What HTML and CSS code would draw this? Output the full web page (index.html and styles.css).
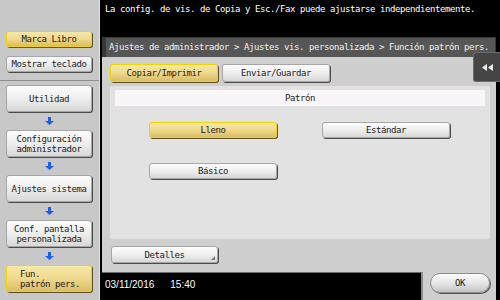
FILE: index.html
```html
<!DOCTYPE html>
<html lang="es">
<head>
<meta charset="utf-8">
<title>Función patrón pers.</title>
<link rel="stylesheet" href="styles.css">
</head>
<body>
<div class="screen">
  <aside class="side">
    <div class="side-top">
      <div class="btn yellow sb">Marca Libro</div>
      <div class="btn sb">Mostrar teclado</div>
    </div>
    <nav class="crumbs">
      <div class="btn nav">Utilidad</div>
      <div class="arrow"><svg width="9" height="8" viewBox="0 0 9 8"><rect x="3" y="0" width="3" height="4" fill="#1c5fe6"/><polygon points="0,4 9,4 4.5,8" fill="#1c5fe6"/></svg></div>
      <div class="btn nav">Configuración<br>administrador</div>
      <div class="arrow"><svg width="9" height="8" viewBox="0 0 9 8"><rect x="3" y="0" width="3" height="4" fill="#1c5fe6"/><polygon points="0,4 9,4 4.5,8" fill="#1c5fe6"/></svg></div>
      <div class="btn nav">Ajustes sistema</div>
      <div class="arrow"><svg width="9" height="8" viewBox="0 0 9 8"><rect x="3" y="0" width="3" height="4" fill="#1c5fe6"/><polygon points="0,4 9,4 4.5,8" fill="#1c5fe6"/></svg></div>
      <div class="btn nav">Conf. pantalla<br>personalizada</div>
      <div class="arrow"><svg width="9" height="8" viewBox="0 0 9 8"><rect x="3" y="0" width="3" height="4" fill="#1c5fe6"/><polygon points="0,4 9,4 4.5,8" fill="#1c5fe6"/></svg></div>
      <div class="btn nav yellow left">Fun.<br>patrón pers.</div>
    </nav>
  </aside>
  <main class="main">
    <div class="msg">La config. de vis. de Copia y Esc./Fax puede ajustarse independientemente.</div>
    <section class="panel">
      <div class="head"><div class="head-in">Ajustes de administrador &gt; Ajustes vis. personalizada &gt; Función patrón pers.</div></div>
      <div class="collapse"><svg width="11" height="7" viewBox="0 0 11 7"><polygon points="0,3.5 5,0 5,7" fill="#f2f2f2"/><polygon points="6,3.5 11,0 11,7" fill="#f2f2f2"/></svg></div>
      <div class="body">
        <div class="tabs">
          <div class="btn yellow tab">Copiar/Imprimir</div>
          <div class="btn tab">Enviar/Guardar</div>
        </div>
        <div class="inner">
          <div class="ptitle">Patrón</div>
          <div class="grid">
            <div class="btn yellow pbtn">Lleno</div>
            <div class="btn pbtn">Estándar</div>
            <div class="btn pbtn">Básico</div>
          </div>
        </div>
        <div class="btn det">Detalles</div>
      </div>
      <div class="foot">
        <div class="clock"><span>03/11/2016</span><span>15:40</span></div>
        <div class="btn ok">OK</div>
      </div>
    </section>
  </main>
</div>
</body>
</html>
```
FILE: styles.css
```css
* { box-sizing: border-box; margin: 0; padding: 0; }
html, body { width: 500px; height: 300px; overflow: hidden; }
body {
  font-family: "DejaVu Sans Mono", "Liberation Mono", monospace;
  font-size: 9px;
  letter-spacing: -0.42px;
  color: #1a1a1a;
  background: #000;
}
.screen { display: flex; width: 500px; height: 300px; }

/* sidebar */
.side {
  width: 100px;
  background: #c8c8c8;
  border-right: 1px solid #e4e4e4;
  display: flex;
  flex-direction: column;
}
.side-top {
  height: 81px;
  padding: 31px 0 0 6px;
  border-bottom: 1px solid #8e8e8e;
  display: flex;
  flex-direction: column;
  gap: 9px;
}
.crumbs { padding-top: 4px; display: flex; flex-direction: column; }
.arrow { height: 18px; width: 98px; display: flex; align-items: center; justify-content: center; }

/* buttons */
.btn {
  display: flex;
  align-items: center;
  justify-content: center;
  text-align: center;
  background: linear-gradient(#fdfdfd, #eeeeee 50%, #d8d8d8);
  border: 1px solid #a6a6a6;
  border-radius: 3px;
  box-shadow: 1px 1px 0 #4c4c4c;
  line-height: 10px;
  white-space: nowrap;
}
.yellow {
  background: linear-gradient(#f7e8a8, #efd98c 50%, #dcbd64);
  border-color: #f2d400;
  box-shadow: 1px 1px 0 #5e5020;
}
.sb { width: 86px; height: 16px; }
.nav { width: 86px; height: 27px; margin-left: 6px; }
.left { justify-content: flex-start; text-align: left; padding-left: 13px; }

/* main */
.main { width: 400px; display: flex; flex-direction: column; background: #000; }
.msg {
  height: 37px;
  color: #fff;
  padding: 3px 0 0 5px;
  line-height: 12px;
  white-space: nowrap;
}
.panel {
  flex: 1;
  margin: 0 4px 0 2px;
  background: #cfcfcf;
  position: relative;
  display: flex;
  flex-direction: column;
}
.head { height: 20px; background: #383838; padding: 1px 1px 0 4px; }
.head-in {
  height: 19px;
  background: #565656;
  color: #f2f2f2;
  padding-left: 3px;
  line-height: 19px;
  white-space: nowrap;
  overflow: hidden;
}
.collapse {
  position: absolute;
  right: -4px;
  top: 15px;
  width: 27px;
  height: 30px;
  background: #454545;
  border: 1px solid #6c6c6c;
  border-right: 0;
  border-radius: 3px 0 0 3px;
  display: flex;
  align-items: center;
  justify-content: center;
}
.body { flex: 1; padding: 7px 6px 0 8px; display: flex; flex-direction: column; }
.tabs { display: flex; gap: 4px; }
.tab { width: 108px; height: 18px; }
.inner {
  margin-top: 4px;
  height: 153px;
  background: #e2e2e2;
  border-radius: 2px;
  padding: 4px 5px;
}
.ptitle { height: 16px; background: #f9f5f9; text-align: center; line-height: 16px; }
.grid {
  display: grid;
  grid-template-columns: 128px 128px;
  column-gap: 45px;
  row-gap: 25px;
  margin: 16px 0 0 34px;
}
.pbtn { height: 16px; }
.det { width: 107px; height: 17px; margin: 7px 0 0 1px; position: relative; }
.det::after {
  content: "";
  position: absolute;
  right: 2px;
  bottom: 2px;
  border-left: 4px solid transparent;
  border-bottom: 4px solid #7a7a7a;
}

/* footer */
.foot { height: 28px; display: flex; align-items: flex-start; }
.clock {
  width: 319px;
  height: 28px;
  background: #000;
  border-top: 1px solid #6a6a6a;
  box-shadow: 2px 0 0 #8a8a8a;
  color: #fff;
  font-family: "Liberation Sans", Arial, sans-serif;
  font-size: 10px;
  letter-spacing: 0;
  line-height: 12px;
  padding: 6px 0 0 3px;
  display: flex;
  gap: 16px;
}
.ok {
  width: 60px;
  height: 20px;
  margin: 1px 0 0 9px;
  border-radius: 10px;
  background: linear-gradient(#fdfdfd, #e6e6e6 50%, #c4c4c4);
  border-color: #8c8c8c;
  box-shadow: 1px 1px 0 #555;
}
```
